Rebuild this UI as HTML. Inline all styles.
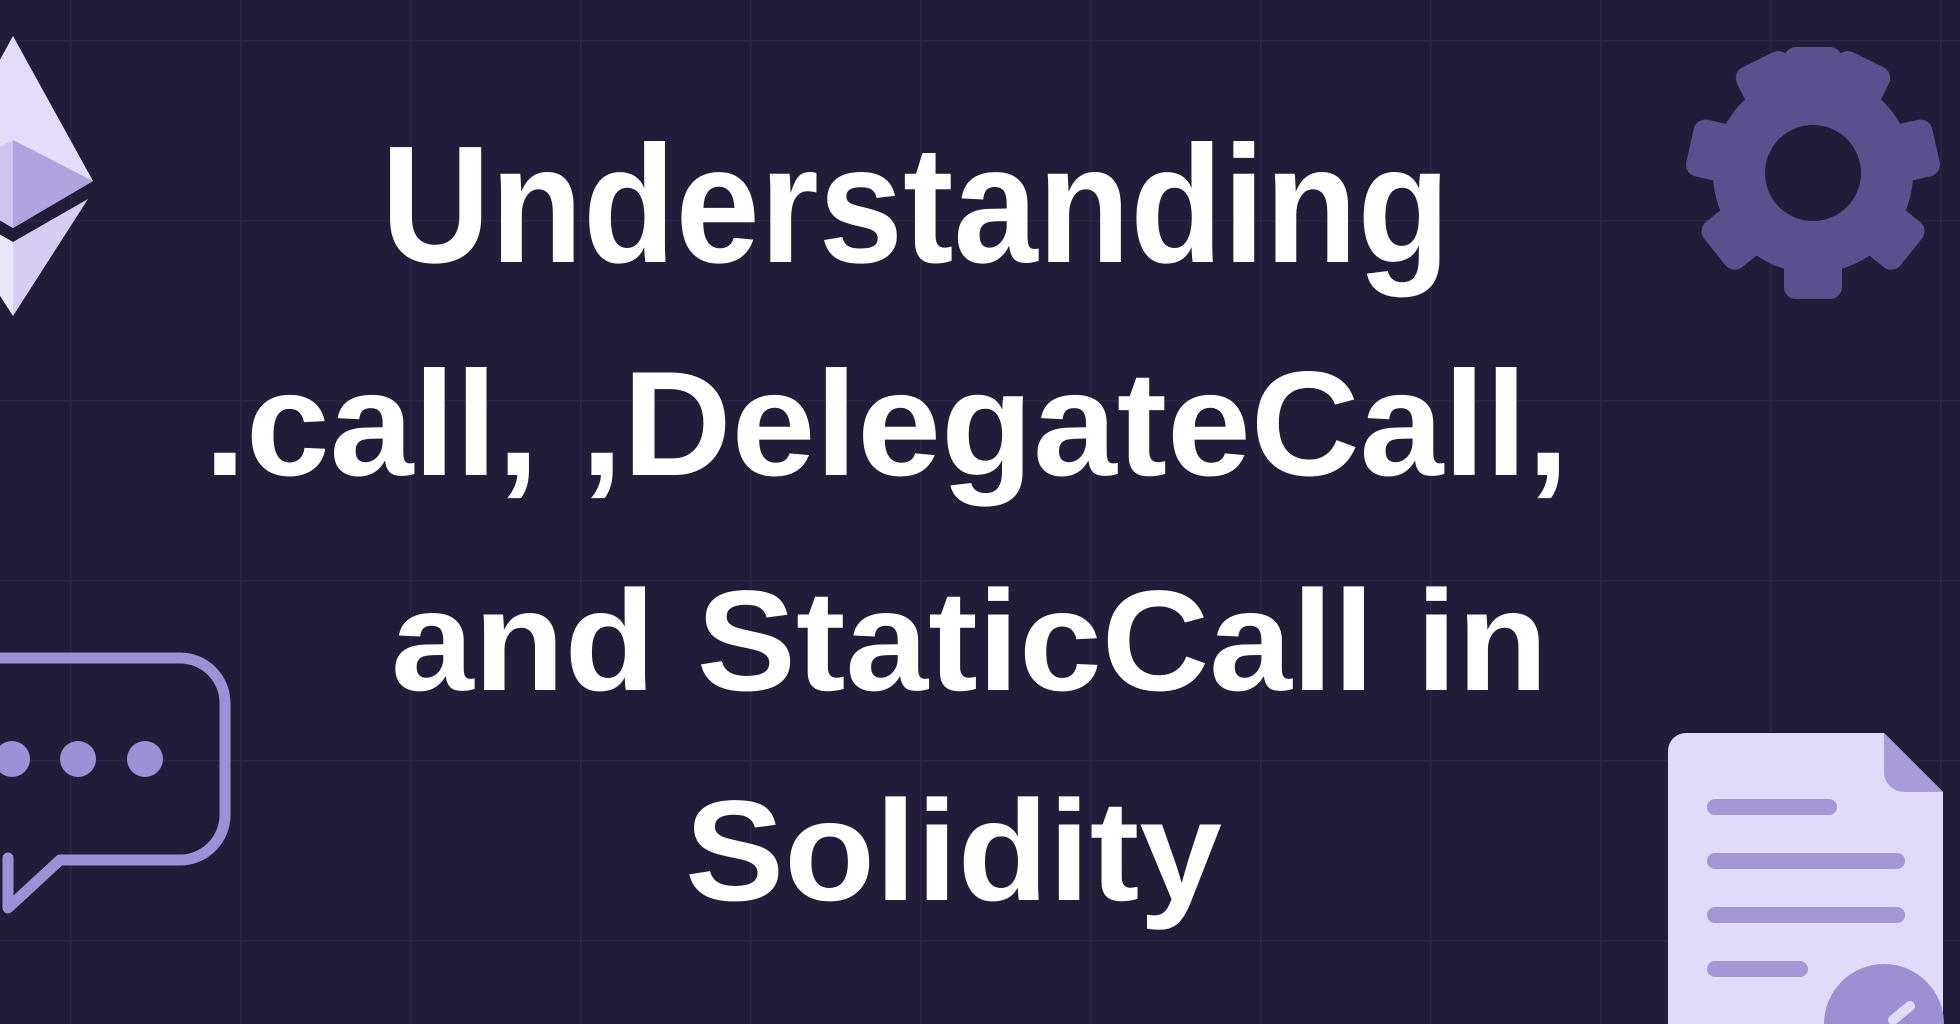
<!DOCTYPE html>
<html><head><meta charset="utf-8"><style>
html,body{margin:0;padding:0;width:1960px;height:1024px;overflow:hidden;background:#231c38}
svg{display:block;overflow:hidden}
</style></head><body>
<svg width="1960" height="1024" viewBox="0 0 1960 1024" xmlns="http://www.w3.org/2000/svg">
<defs>
<pattern id="g" x="70" y="40" width="170" height="180" patternUnits="userSpaceOnUse">
<path d="M0 0V180M0 0H170" stroke="#2d2549" stroke-width="3" fill="none"/>
</pattern>
</defs>
<rect width="1960" height="1024" fill="#231c38"/>
<rect width="1960" height="1024" fill="url(#g)"/>

<!-- Ethereum -->
<polygon points="13,36 93,181 13,228 -67,181" fill="#e4dcf8"/>
<polygon points="13,140 93,181 13,228" fill="#b0a3de"/>
<polygon points="13,140 -67,181 13,228" fill="#cfc4f0"/>
<polygon points="88,199 13,316 13,242" fill="#d6ccf4"/>
<polygon points="13,242 13,316 -62,199" fill="#ece6fb"/>

<!-- Gear -->
<g transform="translate(1813,173)" fill="#5b4f8e">
<circle r="100"/>
<g id="t"><rect x="-29" y="-126" width="58" height="52" rx="12"/></g>
<use href="#t" transform="rotate(180)"/>
<use href="#t" transform="rotate(-26)"/>
<use href="#t" transform="rotate(26)"/>
<use href="#t" transform="rotate(77.4)"/>
<use href="#t" transform="rotate(128.8)"/>
<use href="#t" transform="rotate(-77.4)"/>
<use href="#t" transform="rotate(-128.8)"/>
<circle r="48" fill="#231c38"/>
</g>

<!-- Chat bubble -->
<path d="M-20 658 H180 A45 45 0 0 1 225 703 V815 A45 45 0 0 1 180 860 H60 L8 908 V858" fill="none" stroke="#9d90d6" stroke-width="11" stroke-linejoin="round" stroke-linecap="round"/>
<circle cx="12" cy="759" r="18" fill="#9d90d6"/>
<circle cx="78" cy="759" r="18" fill="#9d90d6"/>
<circle cx="145" cy="759" r="18" fill="#9d90d6"/>

<!-- Document -->
<path d="M1686 733 H1884 L1943 792 V1024 H1668 V751 A18 18 0 0 1 1686 733 Z" fill="#e2dbf8"/>
<path d="M1884 733 L1943 792 H1904 A20 20 0 0 1 1884 772 Z" fill="#a89bd8"/>
<g stroke="#a596d6" stroke-width="16" stroke-linecap="round">
<line x1="1715" y1="807" x2="1829" y2="807"/>
<line x1="1715" y1="861" x2="1897" y2="861"/>
<line x1="1715" y1="915" x2="1897" y2="915"/>
<line x1="1715" y1="969" x2="1800" y2="969"/>
</g>
<path d="M1824 1024 A60 60 0 0 1 1944 1024 Z" fill="#9d8fd2"/>
<line x1="1893" y1="1020" x2="1910" y2="1006" stroke="#e2dbf8" stroke-width="10" stroke-linecap="round"/>

<!-- Title -->
<g fill="#ffffff" font-family="'Liberation Sans', Arial, sans-serif" font-weight="700">
<text x="381" y="262" font-size="167" textLength="1069" lengthAdjust="spacingAndGlyphs">Understanding</text>
<text x="204" y="475" font-size="149" textLength="1365" lengthAdjust="spacingAndGlyphs">.call, ,DelegateCall,</text>
<text x="391" y="690" font-size="143" textLength="1157" lengthAdjust="spacingAndGlyphs">and StaticCall in</text>
<text x="685" y="900" font-size="143" textLength="537" lengthAdjust="spacingAndGlyphs">Solidity</text>
</g>
</svg>
</body></html>
